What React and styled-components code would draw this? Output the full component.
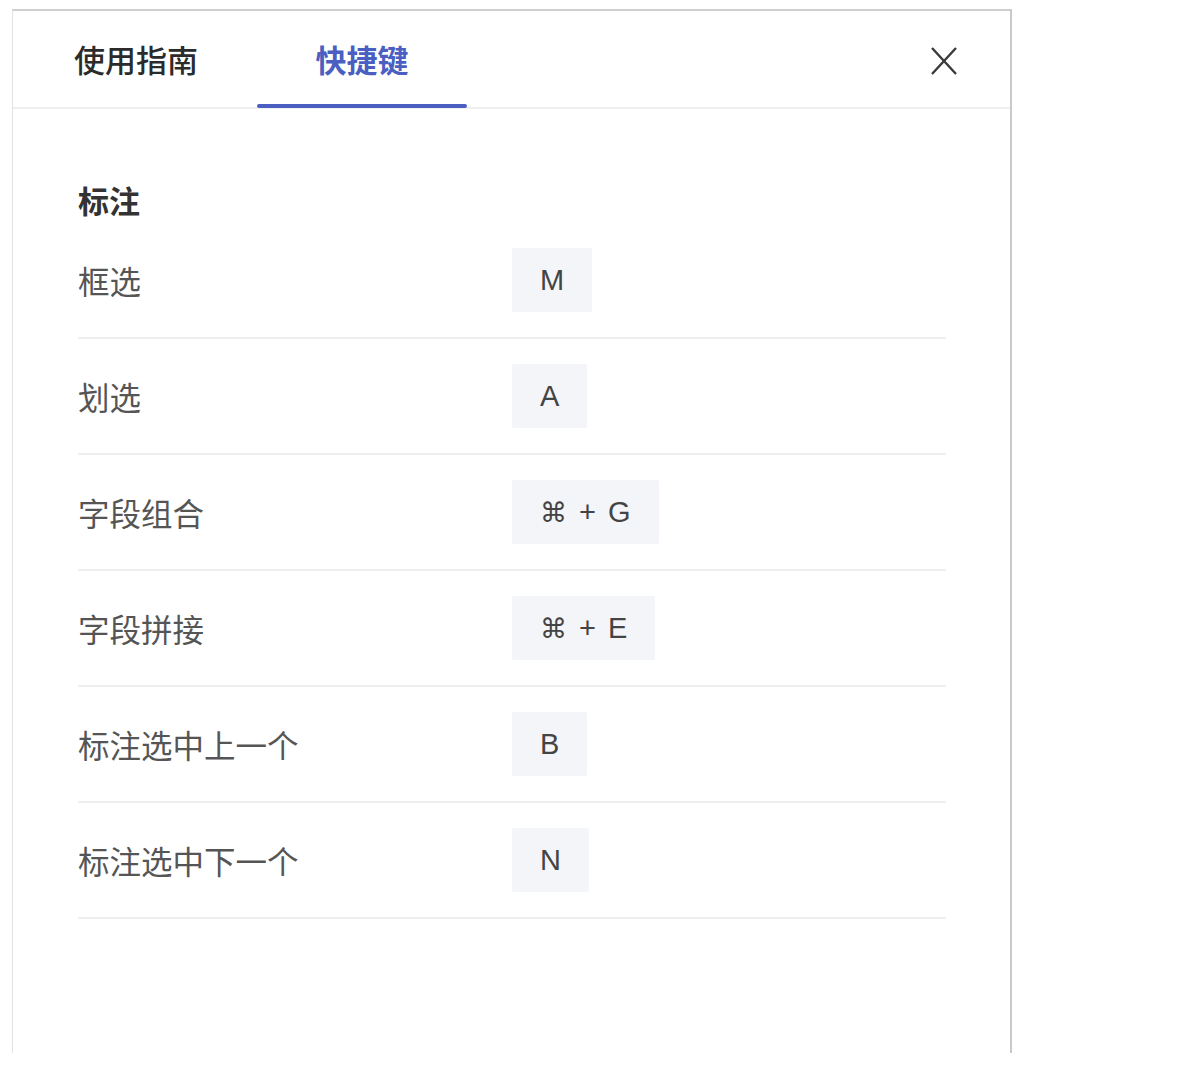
import React from 'react'
import styled, { createGlobalStyle } from 'styled-components'

const GlobalStyle = createGlobalStyle`
  html, body {
    margin: 0;
    padding: 0;
    background: #fff;
  }
  body {
    font-family: "Noto Sans CJK SC", "Liberation Sans", sans-serif;
  }
`

const Page = styled.div`
  padding: 9px 0 0 12px;
`

const Panel = styled.div`
  width: 1000px;
  height: 1044px;
  box-sizing: border-box;
  border-top: 2px solid #cfcfcf;
  border-left: 1px solid #e2e2e2;
  border-right: 2px solid #c9c9c9;
  background: #fff;
  display: flex;
  flex-direction: column;
`

const Header = styled.div`
  display: flex;
  align-items: center;
  justify-content: space-between;
  height: 96px;
  border-bottom: 2px solid #efefef;
  padding-right: 52px;
`

const Tabs = styled.div`
  display: flex;
  gap: 16px;
  padding-left: 18px;
  height: 100%;
`

const Tab = styled.div`
  position: relative;
  width: 210px;
  display: flex;
  align-items: center;
  justify-content: center;
  font-size: 31px;
  font-weight: ${p => (p.$active ? 700 : 500)};
  color: ${p => (p.$active ? '#4a5fc1' : '#2b2b2b')};
  padding-bottom: 2px;

  &::after {
    content: '';
    display: ${p => (p.$active ? 'block' : 'none')};
    position: absolute;
    left: 0;
    right: 0;
    bottom: -1px;
    height: 4px;
    border-radius: 2px;
    background: #4a5fc1;
  }
`

const Close = styled.button`
  border: none;
  background: none;
  padding: 0;
  margin-top: 4px;
  width: 28px;
  height: 30px;
  display: flex;
  align-items: center;
  justify-content: center;
  cursor: pointer;
`

const Content = styled.div`
  padding: 68px 64px 0 65px;
`

const SectionTitle = styled.div`
  font-size: 31px;
  line-height: 46px;
  font-weight: 700;
  color: #333;
`

const Row = styled.div`
  display: grid;
  grid-template-columns: 434px 1fr;
  align-items: center;
  height: 114px;
  border-bottom: 2px solid #eeeeee;
`

const Label = styled.div`
  font-size: 31.5px;
  color: #555;
`

const Key = styled.div`
  justify-self: start;
  height: 64px;
  padding: 0 28px;
  display: flex;
  align-items: center;
  gap: 12px;
  background: #f4f5f8;
  border-radius: 2px;
  font-family: "Liberation Sans", "DejaVu Sans", sans-serif;
  font-size: 29px;
  color: #444;
`

const Cmd = styled.span`
  font-family: "DejaVu Sans", sans-serif;
  font-size: 27px;
`

const shortcuts = [
  { label: '框选', keys: ['M'] },
  { label: '划选', keys: ['A'] },
  { label: '字段组合', keys: ['cmd', 'G'] },
  { label: '字段拼接', keys: ['cmd', 'E'] },
  { label: '标注选中上一个', keys: ['B'] },
  { label: '标注选中下一个', keys: ['N'] },
]

function KeyCombo({ keys }) {
  if (keys.length === 1) return <Key>{keys[0]}</Key>
  return (
    <Key>
      <Cmd>⌘</Cmd>
      <span>+</span>
      <span>{keys[1]}</span>
    </Key>
  )
}

export default function App() {
  return (
    <>
      <GlobalStyle />
      <Page>
        <Panel>
          <Header>
            <Tabs>
              <Tab>使用指南</Tab>
              <Tab $active>快捷键</Tab>
            </Tabs>
            <Close aria-label="close">
              <svg width="26" height="28" viewBox="0 0 26 28">
                <path d="M1 1 L25 27 M25 1 L1 27" stroke="#3a3a3a" strokeWidth="2.4" fill="none" />
              </svg>
            </Close>
          </Header>
          <Content>
            <SectionTitle>标注</SectionTitle>
            {shortcuts.map(s => (
              <Row key={s.label}>
                <Label>{s.label}</Label>
                <KeyCombo keys={s.keys} />
              </Row>
            ))}
          </Content>
        </Panel>
      </Page>
    </>
  )
}
